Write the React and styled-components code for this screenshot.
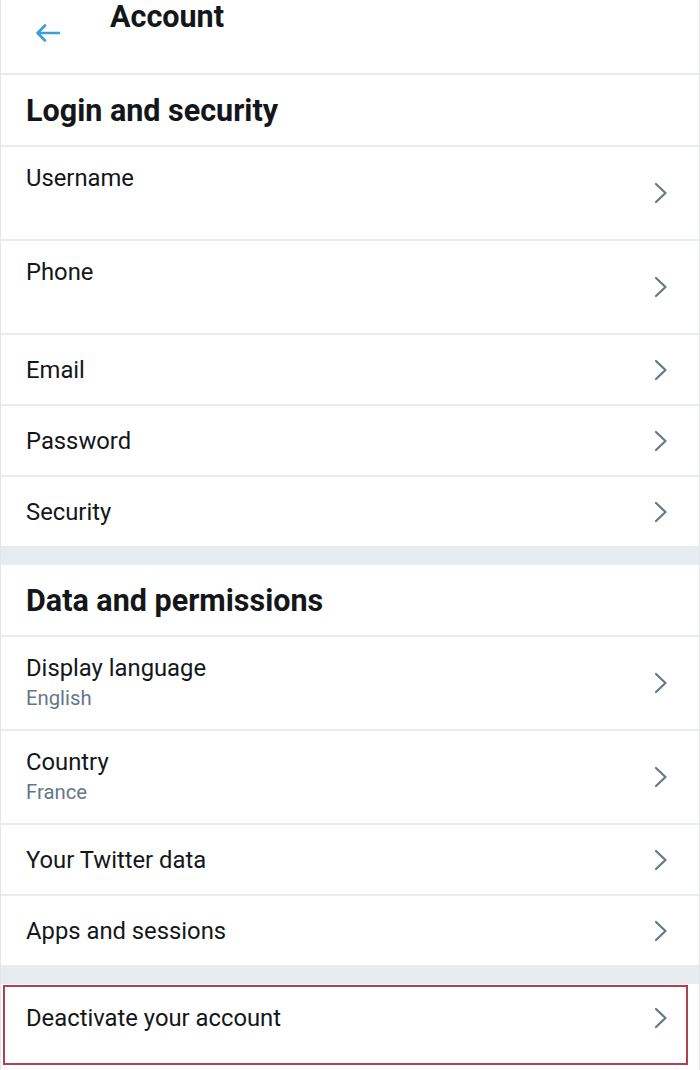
import React from 'react';
import styled, { createGlobalStyle } from 'styled-components';

const GlobalStyle = createGlobalStyle`
    body {
        margin: 0;
        background: #ffffff;
        font-family: Roboto, "Noto Sans", Arial, sans-serif;
        color: #14171a;
    }
`;

const sections = [
    {
        title: 'Login and security',
        items: [
            { label: 'Username', sub: ' ', tall: true },
            { label: 'Phone', sub: ' ', tall: true },
            { label: 'Email' },
            { label: 'Password' },
            { label: 'Security' },
        ],
    },
    {
        title: 'Data and permissions',
        items: [
            { label: 'Display language', sub: 'English', tall: true },
            { label: 'Country', sub: 'France', tall: true },
            { label: 'Your Twitter data' },
            { label: 'Apps and sessions' },
        ],
    },
];

function Chevron() {
    return (
        <ChevronIcon viewBox="0 0 14 22" fill="none">
            <path d="M2 2l9.5 9L2 20" stroke="#657786" strokeWidth="2.2" strokeLinecap="round" strokeLinejoin="round" />
        </ChevronIcon>
    );
}

function Row({ label, sub, tall, last }) {
    return (
        <RowWrap tall={tall} last={last}>
            <RowText>
                <Label>{label}</Label>
                {sub && <Sub>{sub}</Sub>}
            </RowText>
            <Chevron />
        </RowWrap>
    );
}

export default function App() {
    return (
        <>
            <GlobalStyle />
            <Page>
                <Header>
                    <BackButton>
                        <svg width="28" height="20" viewBox="0 0 28 20" fill="none">
                            <path d="M25 10H4M11 2.5L3.5 10l7.5 7.5" stroke="#3c9fd6" strokeWidth="2.6" strokeLinecap="round" strokeLinejoin="round" />
                        </svg>
                    </BackButton>
                    <Title>Account</Title>
                </Header>
                {sections.map((section, i) => (
                    <React.Fragment key={section.title}>
                        {i > 0 && <Spacer />}
                        <SectionTitle>{section.title}</SectionTitle>
                        {section.items.map(item => (
                            <Row key={item.label} {...item} />
                        ))}
                    </React.Fragment>
                ))}
                <Spacer />
                <Highlighted>
                    <Row label="Deactivate your account" last />
                    <Marker />
                </Highlighted>
            </Page>
        </>
    );
}

const Page = styled.div`
    width: 700px;
    min-height: 1070px;
    box-sizing: border-box;
    border-left: 1px solid #e3e6e8;
    border-right: 1px solid #e3e6e8;
    background: #ffffff;
`;

const Header = styled.div`
    height: 75px;
    display: flex;
    align-items: flex-start;
    border-bottom: 2px solid #e6e9ea;
    box-sizing: border-box;
`;

const BackButton = styled.div`
    width: 109px;
    padding: 23px 0 0 33px;
    box-sizing: border-box;
    display: flex;
`;

const Title = styled.h1`
    margin: 0;
    font-size: 30.5px;
    font-weight: 700;
    line-height: 34px;
    color: #14171a;
`;

const SectionTitle = styled.h2`
    margin: 0;
    height: 72px;
    box-sizing: border-box;
    display: flex;
    align-items: center;
    padding: 0 25px;
    font-size: 30.5px;
    font-weight: 700;
    color: #14171a;
    border-bottom: 2px solid #e9ecee;
`;

const RowWrap = styled.div`
    height: ${props => (props.tall ? '94px' : props.last ? '68px' : '71px')};
    box-sizing: border-box;
    display: flex;
    align-items: center;
    justify-content: space-between;
    padding: 0 31px 0 25px;
    border-bottom: ${props => (props.last ? 'none' : '2px solid #e9ecee')};
    background: #ffffff;
`;

const RowText = styled.div`
    display: flex;
    flex-direction: column;
`;

const Label = styled.div`
    font-size: 23.8px;
    line-height: 30px;
    color: #14171a;
`;

const Sub = styled.div`
    font-size: 20.3px;
    line-height: 30px;
    color: #657786;
    white-space: pre;
`;

const ChevronIcon = styled.svg`
    width: 14px;
    height: 22px;
    flex-shrink: 0;
`;

const Spacer = styled.div`
    height: ${props => props.size || 17}px;
    background: #e6ecf0;
`;

const Highlighted = styled.div`
    position: relative;
`;

const Marker = styled.div`
    position: absolute;
    left: 2px;
    top: 1px;
    width: 685px;
    height: 80px;
    box-sizing: border-box;
    border: 2px solid #b2404e;
    pointer-events: none;
`;
